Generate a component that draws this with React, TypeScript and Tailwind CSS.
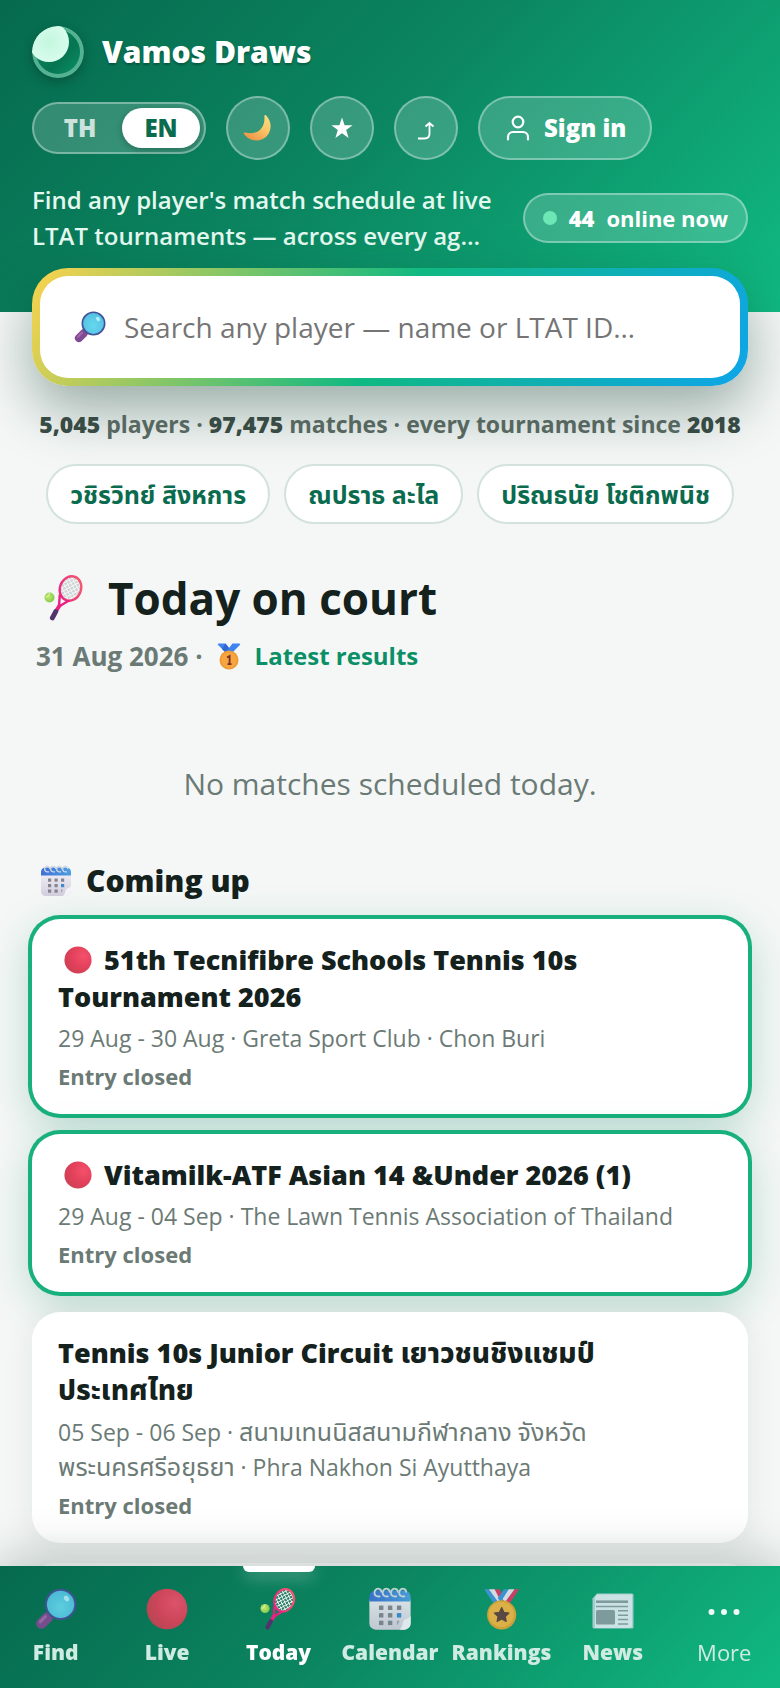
import type { ReactNode } from "react";

type IconProps = { className?: string };

function LogoIcon({ className }: IconProps) {
    return (
        <svg viewBox="0 0 52 52" className={className} aria-hidden="true">
            <defs>
                <linearGradient id="logo-base" x1="0" y1="0" x2="1" y2="1">
                    <stop offset="0" stopColor="#0c8a63" />
                    <stop offset="0.6" stopColor="#067551" />
                    <stop offset="1" stopColor="#0b9469" />
                </linearGradient>
                <radialGradient id="logo-ball" cx="0.5" cy="0.5" r="0.6">
                    <stop offset="0" stopColor="#c3f7de" />
                    <stop offset="1" stopColor="#dcfdf0" />
                </radialGradient>
                <clipPath id="logo-clip">
                    <circle cx="26" cy="26" r="26" />
                </clipPath>
            </defs>
            <circle cx="26" cy="26" r="24" fill="url(#logo-base)" stroke="#54b292" strokeWidth="4" />
            <circle cx="17" cy="16" r="20" fill="url(#logo-ball)" clipPath="url(#logo-clip)" />
        </svg>
    );
}

function MoonIcon({ className }: IconProps) {
    return (
        <svg viewBox="0 0 32 32" className={className} aria-hidden="true">
            <defs>
                <linearGradient id="moon" x1="1" y1="0" x2="0.3" y2="1">
                    <stop offset="0" stopColor="#fbe08a" />
                    <stop offset="0.5" stopColor="#f9c566" />
                    <stop offset="1" stopColor="#ee9548" />
                </linearGradient>
            </defs>
            <path d="M24.5 2.500c6 6 6.800 15.500 1 22-6 6.500-18 7-24.500-2-.8-1 .2-2 1.300-1.600C15 24 24 16.500 22.800 3.500c-.2-1.300.9-2 1.700-1z" fill="url(#moon)" />
        </svg>
    );
}

function SearchIcon({ className }: IconProps) {
    return (
        <svg viewBox="0 0 32 32" className={className} aria-hidden="true">
            <defs>
                <radialGradient id="lens" cx="0.5" cy="0.6" r="0.6">
                    <stop offset="0" stopColor="#66d8ee" />
                    <stop offset="1" stopColor="#52c0e2" />
                </radialGradient>
            </defs>
            <path d="M13 18.500 4.500 27" stroke="#6b4a8e" strokeWidth="3" />
            <path d="M9.700 22.300 4.900 27.100" stroke="#824a93" strokeWidth="8" strokeLinecap="round" />
            <path d="M8 21.800 4 25.800" stroke="#a068ab" strokeWidth="2.200" strokeLinecap="round" />
            <circle cx="19.500" cy="12.500" r="11.200" fill="url(#lens)" stroke="#44509a" strokeWidth="1.600" />
            <ellipse cx="24" cy="8" rx="1.800" ry="2.400" fill="#b0effa" transform="rotate(-35 24 8)" />
        </svg>
    );
}

function RacketIcon({ className }: IconProps) {
    return (
        <svg viewBox="0 0 40 46" className={className} aria-hidden="true">
            <defs>
                <radialGradient id="tennis-ball" cx="0.4" cy="0.4" r="0.7">
                    <stop offset="0" stopColor="#c3ec6e" />
                    <stop offset="1" stopColor="#7fc24c" />
                </radialGradient>
                <linearGradient id="racket-frame" x1="1" y1="0" x2="0" y2="1">
                    <stop offset="0" stopColor="#f4606d" />
                    <stop offset="1" stopColor="#ec1f83" />
                </linearGradient>
                <pattern id="strings" width="3.400" height="3.400" patternUnits="userSpaceOnUse" patternTransform="rotate(40)">
                    <path d="M0 0h3.400M0 0v3.400" stroke="#f6f7f8" strokeWidth="1.900" />
                </pattern>
            </defs>
            <ellipse cx="26.500" cy="13.500" rx="10.500" ry="12.500" fill="#74857f" fillOpacity="0.3" transform="rotate(22 26.500 13.500)" />
            <ellipse cx="26.500" cy="13.500" rx="10.500" ry="12.500" fill="url(#strings)" stroke="url(#racket-frame)" strokeWidth="2.400" transform="rotate(22 26.500 13.500)" />
            <path d="M15.800 19.500 15 31.500M25 25.500 15 31.500" stroke="#ec1f83" strokeWidth="2.400" fill="none" />
            <path d="M16.500 29 11.500 37" stroke="#ec1f83" strokeWidth="3.800" />
            <path d="M11.800 36.500 8.300 43" stroke="#51346c" strokeWidth="4.800" strokeLinecap="round" />
            <circle cx="5.500" cy="22.500" r="5" fill="url(#tennis-ball)" />
            <path d="M1.500 22c2 .2 3.500-1 4-4" stroke="#dff5a8" strokeWidth="0.900" fill="none" />
        </svg>
    );
}

function RedCircleIcon({ className }: IconProps) {
    return (
        <svg viewBox="0 0 32 32" className={className} aria-hidden="true">
            <defs>
                <radialGradient id="red-ball" cx="0.7" cy="0.35" r="0.75">
                    <stop offset="0" stopColor="#f4506c" />
                    <stop offset="0.6" stopColor="#e2405a" />
                    <stop offset="1" stopColor="#cb4153" />
                </radialGradient>
            </defs>
            <circle cx="16" cy="16" r="15.500" fill="url(#red-ball)" />
        </svg>
    );
}

function CalendarIcon({ className }: IconProps) {
    return (
        <svg viewBox="0 0 32 32" className={className} aria-hidden="true">
            <defs>
                <linearGradient id="cal-top" x1="0" y1="0" x2="1" y2="0">
                    <stop offset="0" stopColor="#3f6fd6" />
                    <stop offset="1" stopColor="#4f9fe0" />
                </linearGradient>
                <linearGradient id="cal-page" x1="0" y1="0" x2="0" y2="1">
                    <stop offset="0" stopColor="#eeecf4" />
                    <stop offset="1" stopColor="#d3cede" />
                </linearGradient>
            </defs>
            <path d="M1 9h30v17.500a4.500 4.500 0 0 1-4.500 4.500h-21A4.500 4.500 0 0 1 1 26.500z" fill="url(#cal-page)" />
            <path d="M1 7a4.500 4.500 0 0 1 4.500-4.500h21A4.500 4.500 0 0 1 31 7v3.500H1z" fill="url(#cal-top)" />
            <path d="M31 21c-1.500 2.500-4 1.800-5 3.500s-.5 4-3 6.500h3.500a4.500 4.500 0 0 0 4.500-4.500z" fill="#f6f4fa" />
            <g fill="none" stroke="#d5dbe4" strokeWidth="1.300" strokeLinecap="round">
                <path d="M8.500 6.800c-2.500.5-4-1-3.800-3C4.900 2 6.300 1 8 1.300c1.200.3 1.700 1.200 1.700 2.200" />
                <path d="M14.500 6.800c-2.500.5-4-1-3.800-3C10.900 2 12.300 1 14 1.300c1.200.3 1.700 1.200 1.700 2.200" />
                <path d="M20.500 6.800c-2.500.5-4-1-3.800-3C16.900 2 18.300 1 20 1.300c1.200.3 1.700 1.200 1.700 2.200" />
                <path d="M26.500 6.800c-2.500.5-4-1-3.800-3C22.900 2 24.300 1 26 1.300c1.200.3 1.700 1.200 1.700 2.200" />
            </g>
            <g fill="#858590">
                <rect x="8" y="13.500" width="3.200" height="3.200" />
                <rect x="14.500" y="13.500" width="3.200" height="3.200" />
                <rect x="21" y="13.500" width="3.200" height="3.200" />
                <rect x="8" y="19" width="3.200" height="3.200" />
                <rect x="14.500" y="19" width="3.200" height="3.200" />
                <rect x="8" y="24.500" width="3.200" height="3.200" />
                <rect x="14.500" y="24.500" width="3.200" height="3.200" />
            </g>
            <rect x="21" y="19" width="3.200" height="3.200" fill="#3d8ad0" />
            <path d="M21 24.500h2l-1.500 3H21z" fill="#a5a3b0" />
        </svg>
    );
}

function FirstPlaceIcon({ className }: IconProps) {
    return (
        <svg viewBox="0 0 24 27" className={className} aria-hidden="true">
            <path d="M1.500.5h7L12 5 15.500.5h7l.8 1L16 9H8L.7 1.500z" fill="#3f83ee" />
            <path d="M8.500.5 12 5l-3 4H8L5 6z" fill="#2f68cf" />
            <circle cx="12" cy="17" r="9.500" fill="#f09a36" />
            <circle cx="12" cy="17" r="7.800" fill="#f6a63f" />
            <path d="M10 14.500 12.600 13v8.200M10.500 21.200h4" stroke="#7a2f2c" strokeWidth="1.800" fill="none" />
        </svg>
    );
}

function MedalIcon({ className }: IconProps) {
    return (
        <svg viewBox="0 0 32 36" className={className} aria-hidden="true">
            <path d="M1 1h4l8 10-4 2z" fill="#3f93dc" />
            <path d="M5 1h5l6 8-3 3z" fill="#e8e3f2" />
            <path d="M10 1h4l4 6-3 4z" fill="#dc3763" />
            <path d="M31 1h-4l-8 10 4 2z" fill="#dc3763" />
            <path d="M27 1h-5l-6 8 3 3z" fill="#e8e3f2" />
            <path d="M22 1h-4l-5.500 8 3 2.500z" fill="#3f93dc" />
            <circle cx="16" cy="23" r="12.500" fill="#e3a234" />
            <circle cx="15.700" cy="22.600" r="10.800" fill="#f2b444" />
            <path d="m16 16.800 1.900 4 4.300.6-3.100 3 .8 4.300-3.900-2.100-3.900 2.100.8-4.300-3.100-3 4.300-.6z" fill="#62403f" stroke="#62403f" strokeLinejoin="round" />
        </svg>
    );
}

function NewsIcon({ className }: IconProps) {
    return (
        <svg viewBox="0 0 42 36" className={className} aria-hidden="true">
            <path d="M1 5 5 .5h35a1.500 1.500 0 0 1 1.500 1.500v32a1.500 1.500 0 0 1-1.500 1.500H2A1.500 1.500 0 0 1 .5 34V5z" fill="#b6d2da" />
            <path d="M5 1.500h35v32l-2 1.500H3V4z" fill="#dfeaf0" />
            <path d="M4 8.700h32" stroke="#8a9ba2" strokeWidth="2.600" />
            <path d="M4 13.500h32M26 17.800h10M26 22.200h10M26 26.600h10M26 31h10" stroke="#8a9ba2" strokeWidth="1.500" />
            <rect x="4" y="17" width="19" height="14.500" rx="1.500" fill="#8a9ba2" />
        </svg>
    );
}

function MoreIcon({ className }: IconProps) {
    return (
        <svg viewBox="0 0 42 42" className={className} aria-hidden="true" fill="#effaf6">
            <circle cx="8.500" cy="24" r="3" />
            <circle cx="21" cy="24" r="3" />
            <circle cx="33.500" cy="24" r="3" />
        </svg>
    );
}

const players = ["วชิรวิทย์ สิงหการ", "ณปราธ ละไล", "ปริณธนัย โชติกพนิช"];

const tournaments = [
    {
        title: "51th Tecnifibre Schools Tennis 10s Tournament 2026",
        meta: "29 Aug - 30 Aug · Greta Sport Club · Chon Buri",
        live: true,
    },
    {
        title: "Vitamilk-ATF Asian 14 &Under 2026 (1)",
        meta: "29 Aug - 04 Sep · The Lawn Tennis Association of Thailand",
        live: true,
    },
    {
        title: "Tennis 10s Junior Circuit เยาวชนชิงแชมป์\nประเทศไทย",
        meta: "05 Sep - 06 Sep · สนามเทนนิสสนามกีฬากลาง จังหวัด\nพระนครศรีอยุธยา · Phra Nakhon Si Ayutthaya",
        live: false,
    },
];

const tabs: { label: string; icon: ReactNode }[] = [
    { label: "Find", icon: <SearchIcon className="size-[42px]" /> },
    { label: "Live", icon: <RedCircleIcon className="size-[42px]" /> },
    { label: "Today", icon: <RacketIcon className="h-[42px]" /> },
    { label: "Calendar", icon: <CalendarIcon className="size-11" /> },
    { label: "Rankings", icon: <MedalIcon className="h-[42px]" /> },
    { label: "News", icon: <NewsIcon className="mt-1 h-9" /> },
];

const glass = "border-2 border-white/35 bg-white/18";

// Thai glyphs run small next to the Latin ones, so Thai runs get their own size
function MixedText({ text, thaiClass }: { text: string; thaiClass: string }) {
    return text.split(/([\u0E00-\u0E7F]+)/).map((part, i) =>
        i % 2 ? (
            <span key={i} className={thaiClass}>
                {part}
            </span>
        ) : (
            part
        ),
    );
}

function Header() {
    return (
        <header className="bg-linear-[135deg,#066a4e_0%,#0b8560_45%,#10b981_100%] px-8 pt-[26px] pb-[58px] text-white">
            <div className="flex items-center gap-[18px]">
                <LogoIcon className="size-[52px] rounded-full shadow-[0_4px_12px_rgba(0,0,0,0.25)]" />
                <span className="text-[30px] leading-9 font-extrabold [text-shadow:0_2px_2px_rgba(0,0,0,0.25)]">Vamos Draws</span>
            </div>
            <div className="mt-[18px] flex items-center gap-5">
                <div className={`flex h-[52px] items-center rounded-full p-1 ${glass}`}>
                    <button className="h-10 w-[84px] text-2xl leading-8 font-extrabold text-white/75">TH</button>
                    <button className="h-10 w-[78px] rounded-full bg-white text-2xl leading-8 font-extrabold text-[#0a6b4e] shadow-[0_2px_6px_rgba(0,0,0,0.25)]">EN</button>
                </div>
                <button aria-label="Dark mode" className={`flex size-16 items-center justify-center rounded-full ${glass}`}>
                    <MoonIcon className="size-[30px]" />
                </button>
                <button aria-label="Favourites" className={`flex size-16 items-center justify-center rounded-full ${glass}`}>
                    <svg viewBox="0 0 24 24" className="size-6" fill="#fff" aria-hidden="true">
                        <path d="m12 1.500 2.600 7.700h8l-6.400 4.900 2.400 7.900-6.600-4.800L5.400 22l2.400-7.900-6.400-4.900h8z" />
                    </svg>
                </button>
                <button aria-label="Share" className={`flex size-16 items-center justify-center rounded-full ${glass}`}>
                    <svg viewBox="0 0 20 20" className="mt-1 size-5" fill="none" stroke="#fff" strokeWidth="1.800" aria-hidden="true">
                        <path d="M2 18.500h6.500c3.500 0 5-1.500 5-5V4M9.500 6.500 13.500 3l4 3.500" />
                    </svg>
                </button>
                <button className={`flex h-16 items-center gap-3 rounded-full px-6 ${glass}`}>
                    <svg viewBox="0 0 28 28" className="size-7" fill="none" stroke="#fff" strokeWidth="2.200" strokeLinecap="round" aria-hidden="true">
                        <circle cx="14" cy="8" r="5.300" />
                        <path d="M4 25.500v-2.500a5 5 0 0 1 5-5h10a5 5 0 0 1 5 5v2.500" />
                    </svg>
                    <span className="text-2xl leading-8 font-extrabold">Sign in</span>
                </button>
            </div>
            <div className="mt-[22px] flex items-center justify-between gap-6">
                <p className="text-2xl leading-9 font-semibold text-[#e3f8ef]">
                    Find any player's match schedule at live LTAT tournaments — across every ag…
                </p>
                <div className={`flex h-[50px] shrink-0 items-center rounded-full px-[18px] text-[22px] leading-8 font-bold ${glass}`}>
                    <span className="mr-3 size-3.5 rounded-full bg-[#6ee7b7]" />
                    <span className="mr-3 font-extrabold">44</span>
                    <span>online now</span>
                </div>
            </div>
        </header>
    );
}

function SearchBar() {
    return (
        <div className="relative rounded-[36px] bg-linear-[120deg,#fcd34d_0%,#10b981_50%,#0ea5e9_100%] p-2 shadow-[0_24px_56px_rgba(6,50,38,0.38)]">
            <label className="flex h-[102px] items-center gap-[18px] rounded-[28px] bg-white px-[34px]">
                <SearchIcon className="size-8 shrink-0" />
                <input
                    type="search"
                    aria-label="Search any player"
                    placeholder="Search any player — name or LTAT ID…"
                    className="w-full min-w-0 text-[28px] leading-10 outline-none placeholder:text-[#757575]"
                />
            </label>
        </div>
    );
}

function TournamentCard({ title, meta, live }: (typeof tournaments)[number]) {
    return (
        <article
            className={`rounded-[28px] bg-white px-[26px] pt-[22px] pb-[21px] ${
                live
                    ? "shadow-[0_0_0_4px_#18b07c,0_12px_44px_rgba(16,130,92,0.28)]"
                    : "shadow-[0_4px_32px_rgba(15,40,30,0.08)]"
            }`}
        >
            <h3 className="text-[27px] leading-[37px] font-extrabold whitespace-pre-line text-[#14211d]">
                {live && <RedCircleIcon className="mr-3 ml-1.5 inline size-7 align-[-4px]" />}
                <MixedText text={title} thaiClass="text-[28px]" />
            </h3>
            <p className="mt-1.5 text-[23px] leading-[34px] whitespace-pre-line text-[#6b7a75]">
                <MixedText text={meta} thaiClass="text-[25px]" />
            </p>
            <p className="mt-1 text-[22px] leading-[34px] font-bold text-[#6b7a75]">Entry closed</p>
        </article>
    );
}

function TabBar() {
    return (
        <nav className="fixed inset-x-0 bottom-0 grid h-[122px] grid-cols-7 bg-linear-[135deg,#066a4e_0%,#0b8560_45%,#10b981_100%] shadow-[0_-8px_48px_rgba(10,40,30,0.25)]">
            {tabs.map(({ label, icon }) => {
                const active = label === "Today";
                return (
                    <a
                        key={label}
                        href={`#${label.toLowerCase()}`}
                        className={`relative flex flex-col items-center pt-[22px] text-[21px] leading-8 font-extrabold ${active ? "text-white" : "text-[#d0ebe1]"}`}
                    >
                        {active && (
                            <span className="absolute top-0 h-1.5 w-[72px] rounded-b-md bg-white shadow-[0_4px_16px_rgba(255,255,255,0.45)]" />
                        )}
                        <span className={`flex h-[42px] items-center ${active ? "" : "opacity-90"}`}>{icon}</span>
                        <span className="mt-1.5">{label}</span>
                    </a>
                );
            })}
            <button className="flex flex-col items-center pt-[22px] text-[22px] leading-8 text-[#d0ebe1]">
                <MoreIcon className="size-[42px]" />
                <span className="mt-1.5">More</span>
            </button>
        </nav>
    );
}

export default function App() {
    return (
        <div className="min-h-screen bg-[#f4f7f6] pb-20 font-['Open_Sans','Noto_Sans','Noto_Sans_Thai',sans-serif]">
            <Header />
            <main className="-mt-11 px-8">
                <SearchBar />
                <p className="relative mt-[22px] text-center text-[23px] leading-8 font-bold whitespace-nowrap text-[#566760]">
                    <b className="font-extrabold text-[#374a43]">5,045</b> players ·{" "}
                    <b className="font-extrabold text-[#374a43]">97,475</b> matches · every tournament since{" "}
                    <b className="font-extrabold text-[#374a43]">2018</b>
                </p>
                <div className="relative mt-6 flex justify-center gap-3.5">
                    {players.map((name) => (
                        <button
                            key={name}
                            className="h-[60px] rounded-full border-2 border-[#d3e2dc] bg-white px-[22px] text-[25px] leading-8 font-bold whitespace-nowrap text-[#0a6b4e]"
                        >
                            {name}
                        </button>
                    ))}
                </div>

                <h1 className="mt-11 flex items-center gap-6 pl-3 text-[44px] leading-[60px] font-bold text-[#14211d]">
                    <RacketIcon className="h-[46px]" />
                    Today on court
                </h1>
                <p className="mt-2.5 flex items-center pl-1 text-[26px] leading-9 font-bold text-[#6b7a75]">
                    31 Aug 2026 ·
                    <a href="#results" className="ml-3.5 flex items-center gap-3.5 text-2xl leading-9 text-[#0b8f66]">
                        <FirstPlaceIcon className="h-[27px]" />
                        Latest results
                    </a>
                </p>
                <p className="mt-[90px] text-center text-3xl leading-10 text-[#6b7a75]">No matches scheduled today.</p>

                <h2 className="mt-[57px] flex items-center gap-3.5 pl-2 text-3xl leading-10 font-extrabold text-[#14211d]">
                    <CalendarIcon className="size-8" />
                    Coming up
                </h2>
                <section className="mt-[18px] flex flex-col gap-5">
                    {tournaments.map((tournament) => (
                        <TournamentCard key={tournament.title} {...tournament} />
                    ))}
                    <div className="h-11 rounded-[28px] bg-white" />
                </section>
            </main>
            <TabBar />
        </div>
    );
}
